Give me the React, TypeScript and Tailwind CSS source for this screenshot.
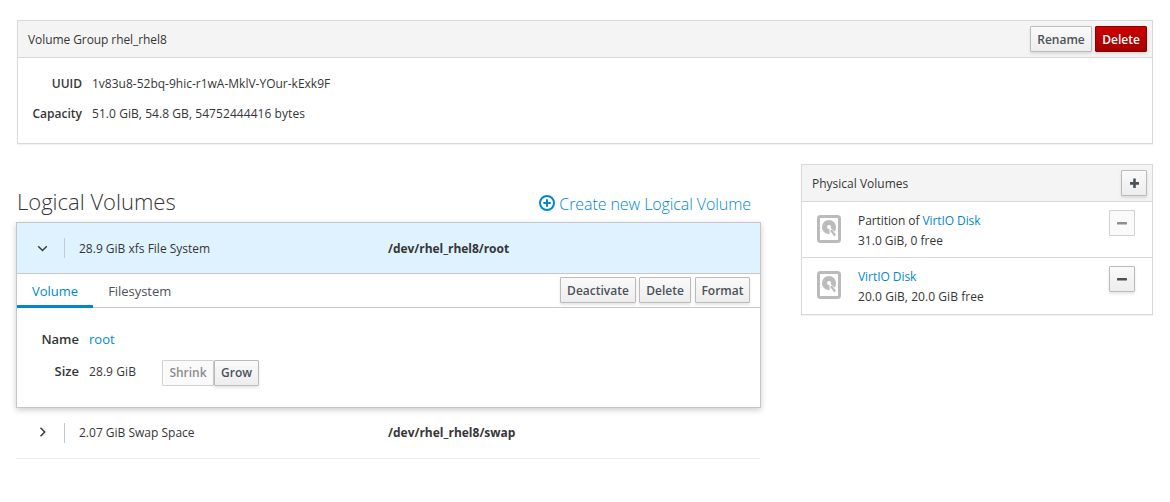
import type { ReactNode } from "react";

type ButtonProps = {
  children: ReactNode;
  variant?: "default" | "danger" | "disabled";
  className?: string;
  label?: string;
};

const variants = {
  default:
    "border-[#bbb] bg-linear-to-b from-[#fafafa] to-[#ededed] text-[#4d5258] shadow-[0_2px_3px_rgba(3,3,3,0.1)]",
  danger:
    "border-[#8b0000] bg-linear-to-b from-[#cc0000] to-[#a30000] text-white shadow-[0_2px_3px_rgba(3,3,3,0.1)]",
  disabled: "border-[#d1d1d1] bg-[#fafafa] text-[#8b8d8f]",
};

function Button({ children, variant = "default", className = "", label }: ButtonProps) {
  return (
    <button
      type="button"
      aria-label={label}
      disabled={variant === "disabled"}
      className={`flex h-[26px] shrink-0 items-center justify-center rounded-[1px] border text-xs leading-5 font-semibold whitespace-nowrap ${variants[variant]} ${className}`}
    >
      {children}
    </button>
  );
}

function DiskIcon() {
  return (
    <svg className="h-7 w-6 shrink-0" viewBox="0 0 24 28">
      <rect x="1.5" y="1.5" width="21" height="25" rx="2" fill="none" stroke="#bbb" strokeWidth="3" />
      <circle cx="12" cy="12" r="7" fill="#bbb" />
      <path d="M12 12L13 21H20V18.5L17.5 16Z" fill="#fff" />
      <circle cx="12" cy="12" r="2" fill="#fff" />
      <path d="M13 15.8L14.8 14.6L19 19.8L17.4 21.4Z" fill="#bbb" />
      <path d="M15.2 14.2L17 12.5L18.5 14.5L17.3 16.5Z" fill="#bbb" />
    </svg>
  );
}

function Minus() {
  return (
    <svg className="size-3" viewBox="0 0 12 12">
      <rect x="1" y="5" width="10" height="2.6" rx="0.7" fill="currentColor" />
    </svg>
  );
}

function Chevron({ open }: { open: boolean }) {
  return (
    <svg className="size-3" viewBox="0 0 12 12" fill="none" stroke="#363b40" strokeWidth="1.5">
      <path d={open ? "M1.2 4.2L5.5 8.5L9.8 4.2" : "M3.5 0.8L7.7 5L3.5 9.2"} />
    </svg>
  );
}

function VolumeSummary({ open, text, device }: { open: boolean; text: string; device: string }) {
  return (
    <div className="flex h-[50px] items-center">
      <div className="flex h-5 w-[47px] items-center pl-5">
        <Chevron open={open} />
      </div>
      <div className="h-5 w-[15px] border-l border-[#c4cacd]" />
      <div className={open ? "w-[309px] pt-px" : "w-[309px]"}>{text}</div>
      <div className={open ? "pt-px font-bold tracking-[-0.04px]" : "font-bold"}>{device}</div>
    </div>
  );
}

function Row({ children, label, className, action }: { children: ReactNode; label: string; className: string; action: ReactNode }) {
  return (
    <section aria-label={label} className={`flex pt-2 pr-[17px] pl-[15px] ${className}`}>
      <div className="w-[41px] pt-[5px]">
        <DiskIcon />
      </div>
      <div className="flex-1 pt-px">{children}</div>
      {action}
    </section>
  );
}

export default function App() {
  return (
    <main className="h-[502px] bg-white pt-5 pr-[17px] pl-4 font-['Open_Sans',sans-serif] text-xs leading-5 text-[#363636]">
      <section className="ml-px h-[124px] border border-[#d9d9d9] shadow-[0_1px_1px_rgba(0,0,0,0.05)]">
        <header className="flex h-[37px] items-center border-b border-[#d9d9d9] bg-[#f4f4f4] pr-[5px] pl-2.5">
          <span className="flex-1 pt-0.5 tracking-[-0.08px]">Volume Group rhel_rhel8</span>
          <Button className="mr-[3px] w-[62px] pt-0.5">Rename</Button>
          <Button variant="danger" className="w-[52px] pt-0.5">Delete</Button>
        </header>
        <dl className="grid grid-cols-[64px_1fr] gap-x-2.5 gap-y-2.5 pt-4">
          <dt className="text-right font-semibold">UUID</dt>
          <dd>1v83u8-52bq-9hic-r1wA-MklV-YOur-kExk9F</dd>
          <dt className="text-right font-semibold">Capacity</dt>
          <dd className="tracking-[0.06px]">51.0 GiB, 54.8 GB, 54752444416 bytes</dd>
        </dl>
      </section>

      <div className="mt-5 flex items-start">
        <section className="w-[745px]">
          <header className="flex h-[58px] items-end pr-2.5 pl-px">
            <h2 className="mb-2 flex-1 text-[22px] leading-[26px] font-light">Logical Volumes</h2>
            <a className="mb-2 flex items-center text-base leading-5 font-light tracking-[-0.08px] text-[#0088ce]">
              <svg className="mr-1 mb-0.5 size-4" viewBox="0 0 16 16" fill="none" stroke="currentColor" strokeWidth="2">
                <circle cx="8" cy="8" r="7" />
                <path d="M8 4.3v7.4M4.3 8h7.4" />
              </svg>
              Create new Logical Volume
            </a>
          </header>

          <article className="h-[186px] border border-[#c7c7c7] bg-white shadow-[0_2px_6px_rgba(3,3,3,0.2)]">
            <div className="border-b border-[#c7c7c7] bg-[#def3ff]">
              <VolumeSummary open text="28.9 GiB xfs File System" device="/dev/rhel_rhel8/root" />
            </div>
            <div className="flex h-[34px] border-b border-[#c7c7c7] pr-2.5">
              <nav className="flex flex-1 text-[13px] text-[#4d5258]">
                <a className="h-[34px] border-b-3 border-[#0088ce] px-[15px] pt-[7px] text-[#0088ce]">Volume</a>
                <a className="px-[15px] pt-[7px] tracking-[-0.05px]">Filesystem</a>
              </nav>
              <div className="flex pt-[3px]">
                <Button className="mr-[3px] w-[76px] pt-0.5">Deactivate</Button>
                <Button className="mr-1 w-[52px] pt-0.5">Delete</Button>
                <Button className="w-[55px] pt-0.5">Format</Button>
              </div>
            </div>
            <div className="grid grid-cols-[62px_1fr] gap-x-[10px] pt-[21px]">
              <div className="h-[31px] text-right text-[13px] font-semibold">Name</div>
              <a className="text-[13px] text-[#0088ce]">root</a>
              <div className="pt-px text-right text-[13px] font-semibold">Size</div>
              <div className="flex">
                <span className="w-[73px] pt-0.5 tracking-[0.08px]">28.9 GiB</span>
                <Button variant="disabled" className="w-[52px]">Shrink</Button>
                <Button className="w-[45px]">Grow</Button>
              </div>
            </div>
          </article>
          <article className="mr-px border-b border-[#ededed] pl-px">
            <VolumeSummary open={false} text="2.07 GiB Swap Space" device="/dev/rhel_rhel8/swap" />
          </article>
        </section>

        <section className="ml-10 h-[151px] w-[352px] border border-[#d9d9d9] shadow-[0_1px_1px_rgba(0,0,0,0.05)]">
          <header className="flex h-[37px] items-center border-b border-[#d9d9d9] bg-[#f4f4f4] pr-[5px] pl-2.5">
            <span className="flex-1 pt-0.5">Physical Volumes</span>
            <Button label="Add" className="w-[26px]">
              <svg className="size-3" viewBox="0 0 12 12">
                <path d="M2 5h3.2V1.5h2.6V5H11v2.7H7.8V11H5.2V7.7H2z" fill="currentColor" />
              </svg>
            </Button>
          </header>
          <div>
            <Row label="Partition" className="h-[55px]" action={<Button label="Remove" variant="disabled" className="w-[26px]"><Minus /></Button>}>
              <div className="tracking-[-0.08px]">Partition of <a className="text-[#0088ce]">VirtIO Disk</a></div>
              <div>31.0 GiB, 0 free</div>
            </Row>
            <Row label="Disk" className="h-14 border-t border-[#d9d9d9]" action={<Button label="Remove" className="w-[26px]"><Minus /></Button>}>
              <a className="block tracking-[-0.05px] text-[#0088ce]">VirtIO Disk</a>
              <div className="tracking-[0.06px]">20.0 GiB, 20.0 GiB free</div>
            </Row>
          </div>
        </section>
      </div>
    </main>
  );
}
